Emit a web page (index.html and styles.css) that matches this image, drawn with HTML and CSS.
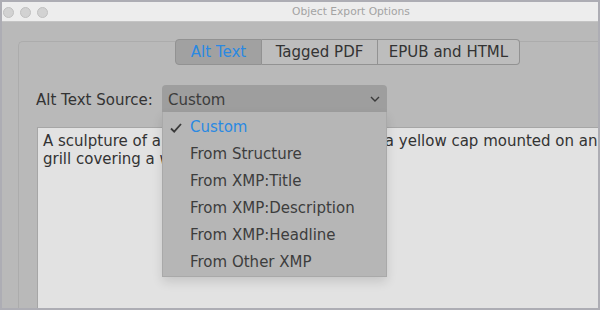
FILE: index.html
```html
<!DOCTYPE html>
<html>
<head>
  <title>Object Export Options</title>
  <link rel="stylesheet" href="styles.css">
</head>
<body>
  <div class="window">
    <div class="titlebar">
      <div class="lights">
        <span class="light"></span>
        <span class="light"></span>
        <span class="light"></span>
      </div>
      <div class="title">Object Export Options</div>
    </div>

    <div class="content">
      <div class="panel">
        <div class="tabs">
          <div class="tab selected">Alt Text</div>
          <div class="tab">Tagged PDF</div>
          <div class="tab">EPUB and HTML</div>
        </div>

        <div class="source-row">
          <span class="label">Alt Text Source:</span>
          <div class="select">
            <span class="value">Custom</span>
            <svg class="chevron" width="10" height="6" viewBox="0 0 10 6">
              <path d="M1 1 L5 5 L9 1" fill="none" stroke="#3a3a3a" stroke-width="1.4"/>
            </svg>
            <!-- open popup menu -->
            <ul class="menu">
              <li class="checked">
                <svg class="check" width="12" height="10" viewBox="0 0 12 10">
                  <path d="M1 5.5 L4.2 8.6 L11 1" fill="none" stroke="#3a3a3a" stroke-width="1.8"/>
                </svg>
                Custom
              </li>
              <li>From Structure</li>
              <li>From XMP:Title</li>
              <li>From XMP:Description</li>
              <li>From XMP:Headline</li>
              <li>From Other XMP</li>
            </ul>
          </div>
        </div>

        <div class="alt-text">
          A sculpture of a shiny silver fire hydrant with a yellow cap mounted on an<br>
          grill covering a wall.
        </div>
      </div>
    </div>
  </div>
</body>
</html>
```

FILE: styles.css
```css
body {
  margin: 0;
  font-family: "DejaVu Sans", Verdana, sans-serif;
  color: #333;
}

.window {
  width: 600px;
  height: 310px;
  box-sizing: border-box;
  border: 2px solid #adadb4;
  background-color: #b9b9b9;
  overflow: hidden;
  display: flex;
  flex-direction: column;
}

.titlebar {
  height: 19px;
  flex-shrink: 0;
  background-color: #ededed;
  border-bottom: 1px solid #c4c4c4;
  display: flex;
  align-items: center;
}

.lights {
  display: flex;
  gap: 6px;
  padding-left: 1px;
  padding-top: 1px;
}

.light {
  width: 9px;
  height: 9px;
  border-radius: 50%;
  background-color: #d2d2d2;
  border: 0.5px solid #c0c0c0;
}

.title {
  flex: 1;
  text-align: center;
  padding-left: 56px;
  font-size: 10.7px;
  color: #a3a3a3;
}

.content {
  flex: 1;
  padding: 19px 0 0 16px;
  display: flex;
}

.panel {
  flex: 1;
  border-top: 1px solid #acacac;
  border-left: 1px solid #acacac;
  border-top-left-radius: 5px;
  display: flex;
  flex-direction: column;
}

.tabs {
  display: flex;
  margin: -3px 0 0 156px;
  height: 26px;
}

.tab {
  border: 1px solid #929292;
  border-left: none;
  background-color: #bdbdbd;
  font-size: 15px;
  display: flex;
  align-items: center;
  justify-content: center;
}

.tab:first-child {
  border-left: 1px solid #929292;
  border-radius: 4px 0 0 4px;
}

.tab:last-child {
  border-radius: 0 4px 4px 0;
}

.tab.selected {
  width: 85px;
  background-color: #a1a1a1;
  color: #2a89e2;
}

.tab:nth-child(2) {
  width: 115px;
}

.tab:nth-child(3) {
  width: 141px;
}

.source-row {
  display: flex;
  align-items: center;
  margin: 20px 0 0 17px;
}

.label {
  font-size: 15px;
  width: 126px;
  padding-top: 2px;
}

.select {
  position: relative;
  width: 225px;
  height: 27px;
  box-sizing: border-box;
  background-color: #9e9e9e;
  border-radius: 4px 4px 0 0;
  padding: 0 7px 0 6px;
  display: flex;
  align-items: center;
  justify-content: space-between;
  font-size: 15px;
  color: #3c3c3c;
}

.value {
  padding-top: 2px;
}

.menu {
  position: absolute;
  top: 27px;
  left: 0;
  width: 225px;
  box-sizing: border-box;
  margin: 0;
  padding: 2px 0 0;
  list-style: none;
  background-color: #b6b6b6;
  border: 1px solid #a9a9a9;
  border-top: none;
  box-shadow: 0 5px 10px rgba(0, 0, 0, 0.12);
  z-index: 2;
}

.menu li {
  height: 27px;
  line-height: 27px;
  padding-left: 27px;
  font-size: 15px;
  color: #3d3d3d;
  position: relative;
}

.menu li.checked {
  color: #2a89e2;
}

.check {
  position: absolute;
  left: 7px;
  top: 9px;
}

.alt-text {
  margin: 15px 0 0 18px;
  flex: 1;
  background-color: #e2e2e2;
  border: 1px solid #a6a6a6;
  border-right: none;
  border-bottom: none;
  padding: 4px 0 0 5px;
  font-size: 15px;
  line-height: 18px;
  white-space: nowrap;
  overflow: hidden;
}
```
